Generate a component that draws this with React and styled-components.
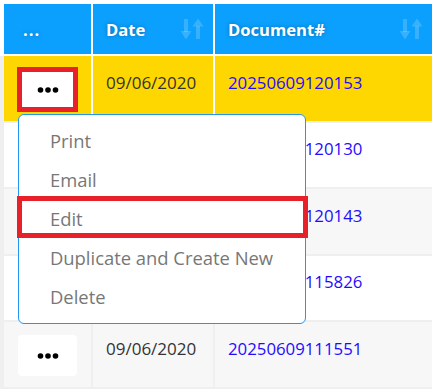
import React from 'react';
import styled, { createGlobalStyle } from 'styled-components';

const Colors = {
    Head: '#0ba0fd',
    Selected: '#ffd700',
    Stripe: '#f7f7f7',
    Line: '#efefef',
    Link: '#1f0cff',
    Mark: '#e8202a',
};

const Global = createGlobalStyle`
    body {
        margin: 0;
        background: #fff;
        font-family: "Open Sans", "Noto Sans", sans-serif;
    }
`;

const Page = styled.div`
    padding: 4px 2px 0 0;
`;

const HeaderRow = styled.div`
    display: grid;
    grid-template-columns: 87px 120px 1fr;
    column-gap: 2px;
    margin-left: 4px;
    height: 50px;
    background: #fff;
`;

const HeadCell = styled.div`
    background: ${Colors.Head};
    color: #fff;
    font-weight: 700;
    font-size: 16.6px;
    letter-spacing: ${(props) => (props.$dots ? '1px' : '0')};
    text-shadow: 0 0 4px rgba(0, 0, 0, 0.3);
    display: flex;
    align-items: center;
    justify-content: space-between;
    padding: 0 9px 0 ${(props) => props.$pad}px;
`;

const SortIcon = styled.svg`
    width: 24px;
    height: 22px;
    filter: blur(0.5px);
`;

const Body = styled.div`
    margin-top: 2px;
    padding: 0 0 2px 4px;
    background: ${Colors.Line};
    display: flex;
    flex-direction: column;
    gap: 2px;
`;

const Row = styled.div`
    display: grid;
    grid-template-columns: 87px 120px 1fr;
    column-gap: 2px;
    height: 64.5px;
    background: ${(props) => (props.$selected ? '#fff' : Colors.Line)};
`;

const Cell = styled.div`
    background: ${(props) => props.$bg};
    padding: 13.5px 13px 0;
    font-size: 17px;
    line-height: 1.5;
    color: #333;
`;

const ActionCell = styled.div`
    background: ${(props) => props.$bg};
    padding: 13px 0 0 14px;
`;

const Anchor = styled.div`
    position: relative;
    width: 59px;
`;

const MoreButton = styled.button`
    display: flex;
    align-items: center;
    justify-content: center;
    width: 59px;
    height: 41px;
    padding: 0;
    border: none;
    border-radius: 4px;
    background: #fff;
    cursor: pointer;
`;

const Mark = styled.div`
    position: absolute;
    top: ${(props) => props.$t}px;
    bottom: ${(props) => props.$b}px;
    left: ${(props) => props.$l}px;
    right: ${(props) => props.$r}px;
    border: 5px solid ${Colors.Mark};
    pointer-events: none;
`;

const Link = styled.a`
    color: ${Colors.Link};
    font-size: 16.8px;
    text-decoration: none;
`;

const Menu = styled.ul`
    position: absolute;
    top: calc(100% + 4px);
    left: 0;
    z-index: 10;
    width: 288px;
    box-sizing: border-box;
    margin: 0;
    padding: 6px 0 7px;
    list-style: none;
    background: #fff;
    border: 1px solid #2196f3;
    border-radius: 6px;
`;

const MenuItem = styled.li`
    position: relative;
    height: 39px;
    line-height: 39px;
    padding-left: 31px;
    font-size: 18.4px;
    color: #777;
    white-space: nowrap;
`;

const Dots = () => (
    <svg width="22" height="8" viewBox="0 0 22 8">
        <circle cx="3.5" cy="4" r="2.8" fill="#000" />
        <circle cx="11" cy="4" r="2.8" fill="#000" />
        <circle cx="18.5" cy="4" r="2.8" fill="#000" />
    </svg>
);

const Sort = () => (
    <SortIcon viewBox="0 0 24 22">
        <g fill="rgba(255,255,255,0.18)">
            <rect x="4" y="1" width="4" height="13" />
            <polygon points="0.5,13 11.5,13 6,21.5" />
            <polygon points="12.5,8.5 23.5,8.5 18,0.5" />
            <rect x="16" y="8" width="4" height="13" />
        </g>
    </SortIcon>
);

const rows = [
    { date: '09/06/2020', doc: '20250609120153' },
    { date: '09/06/2020', doc: '20250609120130' },
    { date: '09/06/2020', doc: '20250609120143' },
    { date: '09/06/2020', doc: '20250609115826' },
    { date: '09/06/2020', doc: '20250609111551' },
];

const actions = ['Print', 'Email', 'Edit', 'Duplicate and Create New', 'Delete'];

const App = () => {
    return (
        <Page>
            <Global />
            <HeaderRow>
                <HeadCell $pad={19} $dots>...</HeadCell>
                <HeadCell $pad={13}>
                    Date
                    <Sort />
                </HeadCell>
                <HeadCell $pad={13}>
                    Document#
                    <Sort />
                </HeadCell>
            </HeaderRow>
            <Body>
                {rows.map((row, i) => {
                    const open = i === 0;
                    const bg = open ? Colors.Selected : i % 2 === 0 ? Colors.Stripe : '#fff';
                    return (
                        <Row key={row.doc} $selected={open}>
                            <ActionCell $bg={bg}>
                                <Anchor>
                                    <MoreButton>
                                        <Dots />
                                    </MoreButton>
                                    {open && (
                                        <>
                                            <Mark $t={-2} $b={-2} $l={-1} $r={-1} />
                                            <Menu>
                                                {actions.map((a) => (
                                                    <MenuItem key={a}>
                                                        {a}
                                                        {a === 'Edit' && (
                                                            <Mark $t={-3} $b={0} $l={-2} $r={-3} />
                                                        )}
                                                    </MenuItem>
                                                ))}
                                            </Menu>
                                        </>
                                    )}
                                </Anchor>
                            </ActionCell>
                            <Cell $bg={bg}>{row.date}</Cell>
                            <Cell $bg={bg}>
                                <Link href="#">{row.doc}</Link>
                            </Cell>
                        </Row>
                    );
                })}
            </Body>
        </Page>
    );
};

export default App;
